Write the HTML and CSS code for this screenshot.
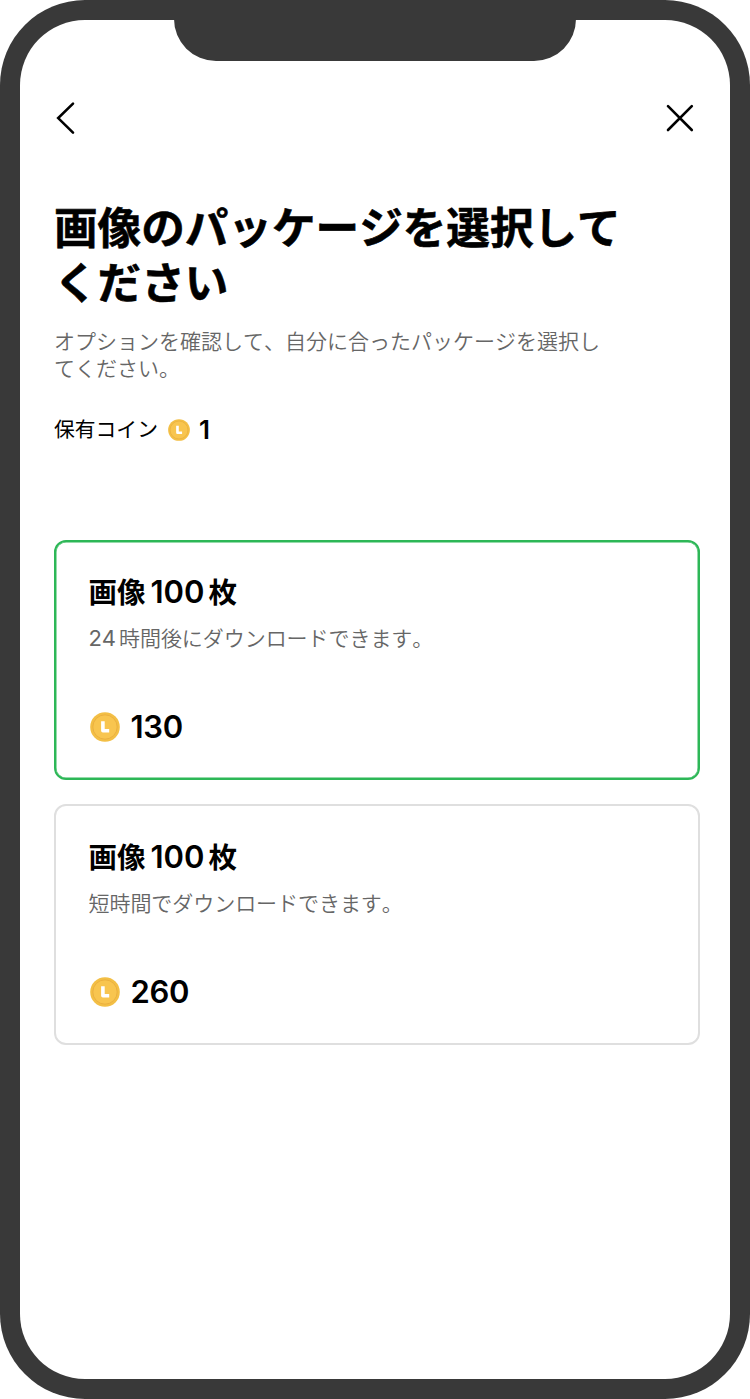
FILE: index.html
```html
<!DOCTYPE html>
<html lang="ja">
<head>
<meta charset="utf-8">
<title>画像のパッケージを選択</title>
<link rel="stylesheet" href="styles.css">
</head>
<body>
<svg class="defs" width="0" height="0" aria-hidden="true">
  <symbol id="coin" viewBox="0 0 30 30">
    <circle cx="15" cy="15" r="14.8" fill="#f3bf45"/>
    <circle cx="15" cy="15" r="12.2" fill="#f8c54f" stroke="#ebb03f" stroke-width="1"/>
    <path d="M12.9 9.2V18.8H19.2" fill="none" stroke="#fff" stroke-width="3.6" stroke-linejoin="round"/>
  </symbol>
</svg>
<div class="phone">
  <div class="notch"></div>
  <main class="screen">
    <nav class="nav">
      <svg class="back" viewBox="0 0 20 34" width="20" height="34"><path d="M17 2.6 2.2 17.1 17 31.6" /></svg>
      <svg class="close" viewBox="0 0 28 28" width="28" height="28"><path d="M2 2.2 25.8 26M25.8 2.2 2 26" /></svg>
    </nav>
    <h1 class="title">画像のパッケージを選択して<br>ください</h1>
    <p class="lead">オプションを確認して、自分に合ったパッケージを選択し<br>てください。</p>
    <div class="balance">
      <span class="balance-label">保有コイン</span>
      <svg class="coin-small" width="22" height="22"><use href="#coin"/></svg>
      <span class="balance-value">1</span>
    </div>
    <section class="cards">
      <article class="card selected">
        <h2 class="card-title">画像<span class="num">100</span>枚</h2>
        <p class="card-text"><span class="digits">24</span>時間後にダウンロードできます。</p>
        <div class="price"><svg width="30" height="30"><use href="#coin"/></svg><span class="amount">130</span></div>
      </article>
      <article class="card">
        <h2 class="card-title">画像<span class="num">100</span>枚</h2>
        <p class="card-text">短時間でダウンロードできます。</p>
        <div class="price"><svg width="30" height="30"><use href="#coin"/></svg><span class="amount">260</span></div>
      </article>
    </section>
  </main>
</div>
</body>
</html>
```
FILE: styles.css
```css
* { box-sizing: border-box; }
body {
  margin: 0;
  background: #fff;
  color: #000;
  font-family: Inter, "Noto Sans CJK JP", sans-serif;
  font-kerning: none;
}
h1, h2, p { margin: 0; font-weight: inherit; }
svg { display: block; flex: none; }
.defs { position: absolute; }
.phone {
  position: relative;
  width: 750px;
  height: 1399px;
  padding: 20.4px;
  background: #393939;
  border-radius: 85px;
}
.notch {
  position: absolute;
  top: 0;
  left: 174px;
  width: 402px;
  height: 60.5px;
  background: #393939;
  border-radius: 0 0 42px 42px;
}
.screen {
  height: 100%;
  padding: 79.6px 29.6px 0 33.6px;
  background: #fff;
  border-radius: 65px;
}
.nav {
  display: flex;
  justify-content: space-between;
  align-items: center;
  height: 36px;
  padding: 0 6px 0 2px;
}
.nav path {
  fill: none;
  stroke: #000;
  stroke-width: 2.6;
  stroke-linecap: round;
  stroke-linejoin: miter;
}
.title {
  margin-top: 65px;
  font-size: 43.6px;
  font-weight: 700;
  line-height: 55px;
  white-space: nowrap;
  -webkit-text-stroke: 0.6px #000;
}
.lead {
  margin-top: 17px;
  color: #666;
  font-size: 21px;
  line-height: 27px;
  font-weight: 350;
  text-spacing-trim: space-all;
  white-space: nowrap;
}
.balance {
  display: flex;
  align-items: center;
  height: 30px;
  margin-top: 33px;
}
.balance-label { font-size: 20.8px; line-height: 30px; }
.coin-small { margin-left: 10px; }
.balance-value { margin-left: 9px; font-size: 26px; font-weight: 600; line-height: 30px; }
.cards {
  display: flex;
  flex-direction: column;
  gap: 24px;
  margin-top: 95px;
}
.card {
  height: 240.5px;
  padding: 34px 32.5px;
  border: 2px solid #dfdfdf;
  border-radius: 12px;
}
.selected {
  padding-top: 33.4px;
  border-color: #2db757;
  box-shadow: inset 0 0 0 0.5px #2db757;
}
.card-title { font-size: 28.5px; font-weight: 600; line-height: 36px; }
.num { margin: 0 4px 0 5px; font-size: 31px; line-height: 1; }
.card-text {
  margin-top: 14px;
  color: #666;
  font-size: 21px;
  font-weight: 350;
  letter-spacing: -0.05px;
  line-height: 28px;
}
.digits { margin-right: 3px; font-size: 22px; font-weight: 400; line-height: 1; }
.price {
  display: flex;
  align-items: center;
  gap: 10px;
  height: 40px;
  margin: 54px 0 0 2px;
}
.amount { font-size: 31px; font-weight: 600; line-height: 40px; letter-spacing: -0.3px; }
```
